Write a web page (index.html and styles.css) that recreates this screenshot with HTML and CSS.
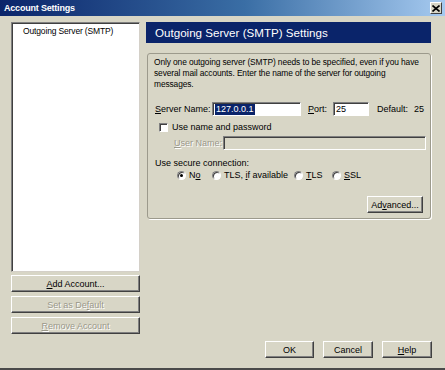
FILE: index.html
```html
<!DOCTYPE html>
<html lang="en">
<head>
    <meta charset="UTF-8">
    <title>Account Settings</title>
    <link rel="stylesheet" href="styles.css">
</head>
<body>

    <div class="dialog">
        <div class="titlebar">
            <span class="title">Account Settings</span>
            <span class="close">
                <svg width="8" height="7" viewBox="0 0 8 7">
                    <path d="M0.5 0.5 L7.5 6.5 M7.5 0.5 L0.5 6.5" stroke="#000" stroke-width="1.6"/>
                </svg>
            </span>
        </div>

        <div class="main">
            <div class="left">
                <div class="account-list">
                    <div class="account-item">Outgoing Server (SMTP)</div>
                </div>
                <button class="btn wide"><u>A</u>dd Account...</button>
                <button class="btn wide" disabled>Set as De<u>f</u>ault</button>
                <button class="btn wide" disabled><u>R</u>emove Account</button>
            </div>

            <div class="right">
                <div class="page-header">Outgoing Server (SMTP) Settings</div>

                <div class="group">
                    <p class="intro">
                        Only one outgoing server (SMTP) needs to be specified, even if you have<br>
                        several mail accounts. Enter the name of the server for outgoing<br>
                        messages.
                    </p>

                    <div class="row server-row">
                        <span class="label server-label"><u>S</u>erver Name:</span>
                        <span class="field server-field"><span class="selected">127.0.0.1</span></span>
                        <span class="label port-label"><u>P</u>ort:</span>
                        <span class="field port-field">25</span>
                        <span class="label default-label">Default:</span>
                        <span class="label">25</span>
                    </div>

                    <div class="row check-row">
                        <span class="checkbox"></span>
                        <span class="label">Use name and password</span>
                    </div>

                    <div class="row user-row">
                        <span class="label user-label disabled"><u>U</u>ser Name:</span>
                        <span class="field user-field"></span>
                    </div>

                    <div class="row secure-label">
                        <span class="label">Use secure connection:</span>
                    </div>

                    <div class="row radio-row">
                        <span class="option opt-no"><span class="radio checked"></span><span class="label">N<u>o</u></span></span>
                        <span class="option opt-if"><span class="radio"></span><span class="label">TLS, <u>i</u>f available</span></span>
                        <span class="option opt-tls"><span class="radio"></span><span class="label"><u>T</u>LS</span></span>
                        <span class="option"><span class="radio"></span><span class="label"><u>S</u>SL</span></span>
                    </div>

                    <div class="row advanced-row">
                        <button class="btn advanced">Ad<u>v</u>anced...</button>
                    </div>
                </div>
            </div>
        </div>

        <div class="footer">
            <button class="btn ok">OK</button>
            <button class="btn cancel">Cancel</button>
            <button class="btn help"><u>H</u>elp</button>
        </div>
    </div>

</body>
</html>
```

FILE: styles.css
```css
body {
    margin: 0;
    padding: 0;
    background-color: #d8d6c6;
    font-family: 'Liberation Sans', Arial, sans-serif;
    font-size: 9px;
    color: #000;
}

.dialog {
    width: 445px;
    height: 370px;
    box-sizing: border-box;
    border-bottom: 2px solid #4a4a4a;
    background-color: #d8d6c6;
    display: flex;
    flex-direction: column;
}

.titlebar {
    height: 16px;
    display: flex;
    align-items: center;
    padding-left: 4px;
    background: linear-gradient(90deg, #0a246a, #3a6ea5 55%, #a6caf0);
}

.title {
    color: #fff;
    font-weight: bold;
    font-size: 9px;
    letter-spacing: -0.2px;
}

.close {
    margin-left: auto;
    margin-right: 3px;
    width: 10px;
    height: 10px;
    background-color: #d8d6c6;
    border: 1px solid;
    border-color: #fff #404040 #404040 #fff;
    display: flex;
    align-items: center;
    justify-content: center;
}

.main {
    display: flex;
    gap: 6px;
    padding: 6px 13px 0 11px;
    height: 312px;
}

.left {
    width: 129px;
    display: flex;
    flex-direction: column;
}

.account-list {
    height: 251px;
    box-sizing: border-box;
    background: #fff;
    border: 1px solid;
    border-color: #808080 #d4d0c8 #d4d0c8 #808080;
    box-shadow: inset 1px 1px 0 #404040;
    padding: 3px 0 0 11px;
}

.account-item {
    font-size: 8.5px;
    letter-spacing: -0.15px;
    line-height: 11px;
}

.btn {
    font-family: 'Liberation Sans', Arial, sans-serif;
    font-size: 9px;
    color: #000;
    background-color: #d8d6c6;
    height: 17px;
    padding: 0;
    box-sizing: border-box;
    border: 1px solid;
    border-color: #fff #404040 #404040 #fff;
    box-shadow: inset -1px -1px 0 #808080;
    white-space: nowrap;
}

.btn:disabled {
    color: #9a988a;
    text-shadow: 1px 1px 0 #fff;
}

.btn.wide {
    width: 129px;
    margin-top: 3px;
}

.btn.wide + .btn.wide {
    margin-top: 4px;
}

.right {
    width: 285px;
}

.page-header {
    height: 21px;
    background-color: #0a246a;
    color: #fff;
    font-size: 11.6px;
    line-height: 21px;
    padding-left: 9px;
}

.group {
    margin-top: 10px;
    margin-left: 1px;
    height: 166px;
    box-sizing: border-box;
    border: 1px solid #9c9a8c;
    border-radius: 3px;
    box-shadow: 1px 1px 0 #fff;
    padding: 3px 4px 0 6px;
}

.intro {
    margin: 0;
    font-size: 8.4px;
    letter-spacing: -0.1px;
    line-height: 11px;
    white-space: nowrap;
}

.row {
    display: flex;
    align-items: center;
    white-space: nowrap;
}

.label {
    flex-shrink: 0;
}

.field {
    flex-shrink: 0;
    background: #fff;
    height: 14px;
    box-sizing: border-box;
    border: 1px solid;
    border-color: #808080 #fff #fff #808080;
    box-shadow: inset 1px 1px 0 #404040;
    display: flex;
    align-items: center;
    padding-left: 2px;
}

.server-row {
    margin-top: 12px;
}

.server-label {
    width: 58px;
    padding-left: 1px;
    box-sizing: border-box;
}

.server-field {
    width: 89px;
}

.selected {
    background-color: #0a246a;
    color: #fff;
    padding: 0 1px;
    line-height: 11px;
}

.port-label {
    margin-left: 7px;
    width: 25px;
}

.port-field {
    width: 36px;
}

.default-label {
    margin-left: 8px;
    width: 37px;
}

.check-row {
    margin-top: 6px;
    padding-left: 5px;
}

.checkbox {
    width: 9px;
    height: 9px;
    box-sizing: border-box;
    background: #fff;
    border: 1px solid;
    border-color: #808080 #fff #fff #808080;
    box-shadow: inset 1px 1px 0 #404040;
    margin-right: 4px;
}

.user-row {
    margin-top: 4px;
    padding-left: 20px;
}

.user-label {
    width: 49px;
}

.disabled {
    color: #9a988a;
    text-shadow: 1px 1px 0 #fff;
}

.user-field {
    width: 203px;
    background-color: #d8d6c6;
}

.secure-label {
    margin-top: 8px;
    padding-left: 1px;
}

.radio-row {
    margin-top: 2px;
    padding-left: 23px;
}

.option {
    display: flex;
    align-items: center;
    gap: 3px;
}

.opt-no {
    width: 35px;
}

.opt-if {
    width: 82px;
}

.opt-tls {
    width: 38px;
}

.radio {
    width: 9px;
    height: 9px;
    box-sizing: border-box;
    border-radius: 50%;
    background: #fff;
    border: 1px solid;
    border-color: #808080 #fff #fff #808080;
    box-shadow: inset 1px 1px 0 #404040;
    position: relative;
}

.radio.checked::after {
    content: '';
    position: absolute;
    left: 2px;
    top: 2px;
    width: 3px;
    height: 3px;
    border-radius: 50%;
    background: #000;
}

.advanced-row {
    justify-content: flex-end;
    margin-top: 16px;
    padding-right: 3px;
}

.btn.advanced {
    width: 56px;
}

.footer {
    display: flex;
    justify-content: flex-end;
    gap: 9px;
    margin-top: 7px;
    padding-right: 13px;
}

.btn.ok {
    width: 49px;
}

.btn.cancel,
.btn.help {
    width: 50px;
}
```
